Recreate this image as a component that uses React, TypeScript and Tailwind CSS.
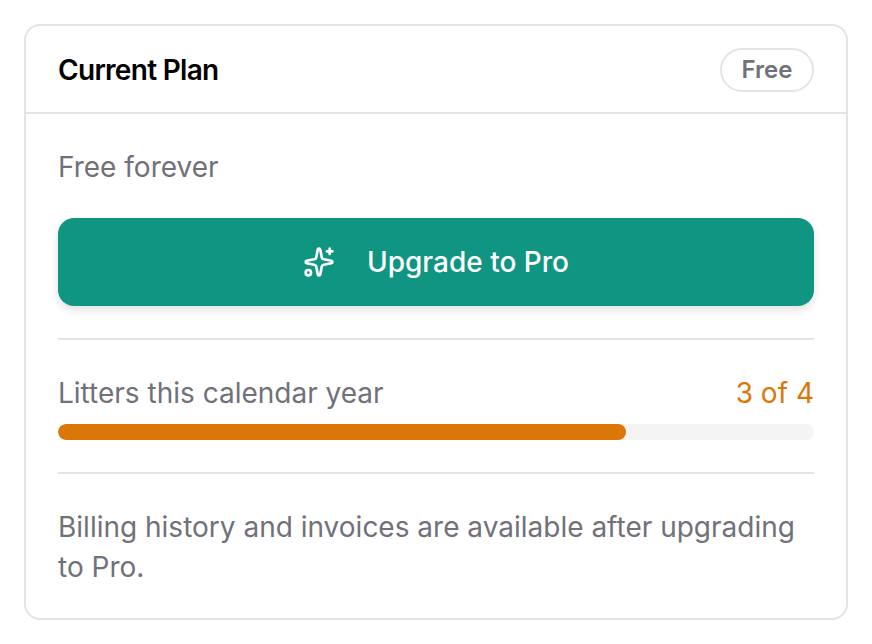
import { Sparkles } from "lucide-react";

export default function App() {
  return (
    <div className="min-h-[644px] bg-white pt-6 px-6 font-['Inter',sans-serif]">
      <div className="w-[824px] h-[596px] rounded-[16px] border-2 border-[#e4e4e7] bg-white overflow-hidden">
        <div className="h-[88px] pt-[2px] flex items-center justify-between px-8 border-b-2 border-[#e4e4e7]">
          <h2 className="text-[28px] font-semibold text-black tracking-[-0.7px]">Current Plan</h2>
          <span className="h-[44px] w-[94px] flex items-center justify-center rounded-full border-2 border-[#e4e4e7] text-[24px] font-semibold text-[#71717a]">
            Free
          </span>
        </div>
        <div className="px-8 pt-[33px]">
          <p className="text-[28px] leading-[40px] text-[#71717a]">Free forever</p>
          <button className="mt-[31px] w-full h-[88px] rounded-[16px] bg-[#109582] text-white text-[28px] font-medium flex items-center justify-center gap-8 shadow-[0_4px_8px_rgba(0,0,0,0.12)]">
            <Sparkles className="w-8 h-8" />
            Upgrade to Pro
          </button>
          <div className="mt-[32px] border-t-2 border-[#e4e4e7] pt-[33px]">
            <div className="flex justify-between text-[28px] leading-[40px]">
              <span className="text-[#71717a]">Litters this calendar year</span>
              <span className="text-[#db7706]">3 of 4</span>
            </div>
            <div className="mt-[11px] h-4 rounded-full bg-[#f4f4f5] overflow-hidden">
              <div className="h-full w-[568px] rounded-full bg-[#db7706]" />
            </div>
          </div>
          <div className="mt-8 border-t-2 border-[#e4e4e7] pt-[33px]">
            <p className="text-[28px] leading-[40px] text-[#71717a]">
              Billing history and invoices are available after upgrading to Pro.
            </p>
          </div>
        </div>
      </div>
    </div>
  );
}
